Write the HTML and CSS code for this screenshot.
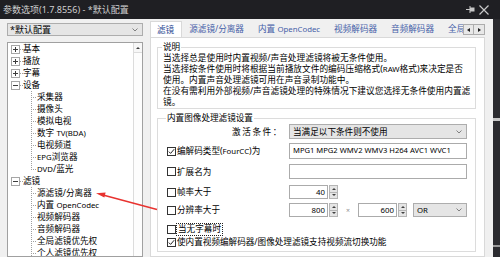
FILE: index.html
```html
<!DOCTYPE html>
<html lang="zh-CN">
  <head>
    <meta charset="UTF-8" />
    <title>参数选项</title>
    <link rel="stylesheet" href="styles.css">
  </head>
  <body>
    <div class="titlebar">
      <span class="title">参数选项(1.7.8556) - *默认配置</span>
      <span class="title-btns">
        <svg width="9" height="9" viewBox="0 0 9 9">
          <path d="M0 4.5H4M4 1V8" stroke="#c8c8c8" stroke-width="1" fill="none" />
          <rect x="4" y="2.5" width="4.5" height="4" fill="#c8c8c8" />
        </svg>
        <svg width="10" height="10" viewBox="0 0 10 10">
          <path d="M0.5 0.5L9.5 9.5M9.5 0.5L0.5 9.5" stroke="#c8c8c8" stroke-width="1.2" fill="none" />
        </svg>
      </span>
    </div>

    <div class="frame">
      <div class="window">
        <div class="sidebar">
          <div class="combo profile">
            <span>*默认配置</span>
            <svg class="chev" width="6" height="4" viewBox="0 0 6 4"><path d="M0.5 0.5L3 3L5.5 0.5" stroke="#808080" fill="none" /></svg>
          </div>
          <div class="tree">
            <div class="tree-list">
              <div class="node"><i class="box plus"></i><i class="stub"></i><span>基本</span></div>
              <div class="node"><i class="box plus"></i><i class="stub"></i><span>播放</span></div>
              <div class="node"><i class="box plus"></i><i class="stub"></i><span>字幕</span></div>
              <div class="node"><i class="box minus"></i><i class="stub"></i><span>设备</span></div>
              <div class="leaf">采集器</div>
              <div class="leaf">摄像头</div>
              <div class="leaf">模拟电视</div>
              <div class="leaf">数字 <span class="lat">TV(BDA)</span></div>
              <div class="leaf">电视频道</div>
              <div class="leaf"><span class="lat">EPG</span>浏览器</div>
              <div class="leaf last"><span class="lat">DVD</span>/蓝光</div>
              <div class="node"><i class="box minus"></i><i class="stub"></i><span>滤镜</span></div>
              <div class="leaf">源滤镜/分离器</div>
              <div class="leaf">内置 <span class="lat">OpenCodec</span></div>
              <div class="leaf">视频解码器</div>
              <div class="leaf">音频解码器</div>
              <div class="leaf">全局滤镜优先权</div>
              <div class="leaf">个人滤镜优先权</div>
            </div>
            <div class="vscroll">
              <div class="scroll-up"><i class="tri-up"></i></div>
              <div class="thumb"></div>
            </div>
          </div>
        </div>

        <div class="content">
          <div class="tabstrip">
            <div class="tab-list">
              <div class="tab active">滤镜</div>
              <div class="tab">源滤镜/分离器</div>
              <div class="tab">内置 <span class="lat">OpenCodec</span></div>
              <div class="tab">视频解码器</div>
              <div class="tab">音频解码器</div>
              <div class="tab">全局滤镜优先权</div>
            </div>
            <div class="tab-scroll">
              <span class="sbtn"><i class="tri-left"></i></span>
              <span class="sbtn"><i class="tri-right"></i></span>
            </div>
          </div>

          <div class="panel">
            <fieldset class="group">
              <legend>说明</legend>
              <p class="desc">当选择总是使用时内置视频/声音处理滤镜将被无条件使用。<br>当选择按条件使用时将根据当前播放文件的编码压缩格式(<span class="lat">RAW</span>格式)来决定是否<br>使用。内置声音处理滤镜可用在声音录制功能中。<br>在没有需利用外部视频/声音滤镜处理的特殊情况下建议您选择无条件使用内置滤<br>镜。</p>
            </fieldset>

            <fieldset class="group settings">
              <legend>内置图像处理滤镜设置</legend>

              <div class="row row-cond">
                <span class="label right">激活条件：</span>
                <div class="combo wide">
                  <span>当满足以下条件则不使用</span>
                  <svg class="chev" width="6" height="4" viewBox="0 0 6 4"><path d="M0.5 0.5L3 3L5.5 0.5" stroke="#808080" fill="none" /></svg>
                </div>
              </div>

              <div class="row row-fourcc">
                <span class="label"><i class="check on"><svg width="7" height="7" viewBox="0 0 7 7"><path d="M0.8 3.6L2.6 5.4L6.2 1.2" stroke="#222" stroke-width="1" fill="none" /></svg></i>编解码类型(<span class="lat">FourCC</span>)为</span>
                <div class="edit wide codes">MPG1 MPG2 WMV2 WMV3 H264 AVC1 WVC1</div>
              </div>

              <div class="row row-ext">
                <span class="label"><i class="check"></i>扩展名为</span>
                <div class="edit wide"></div>
              </div>

              <div class="row row-fps">
                <span class="label"><i class="check"></i>帧率大于</span>
                <div class="spinbox">
                  <div class="edit num">40</div>
                  <div class="spin"><span><i class="tri-up"></i></span><span><i class="tri-down"></i></span></div>
                </div>
              </div>

              <div class="row row-res">
                <span class="label"><i class="check"></i>分辨率大于</span>
                <div class="spinbox">
                  <div class="edit num">800</div>
                  <div class="spin"><span><i class="tri-up"></i></span><span><i class="tri-down"></i></span></div>
                </div>
                <span class="times">×</span>
                <div class="spinbox">
                  <div class="edit num">600</div>
                  <div class="spin"><span><i class="tri-up"></i></span><span><i class="tri-down"></i></span></div>
                </div>
                <div class="combo small">
                  <span class="lat">OR</span>
                  <svg class="chev" width="6" height="4" viewBox="0 0 6 4"><path d="M0.5 0.5L3 3L5.5 0.5" stroke="#808080" fill="none" /></svg>
                </div>
              </div>

              <div class="row row-nosub">
                <span class="label"><i class="check"></i><span class="focus">当无字幕时</span></span>
              </div>

              <div class="row row-switch">
                <span class="label"><i class="check on"><svg width="7" height="7" viewBox="0 0 7 7"><path d="M0.8 3.6L2.6 5.4L6.2 1.2" stroke="#222" stroke-width="1" fill="none" /></svg></i>使内置视频编解码器/图像处理滤镜支持视频流切换功能</span>
              </div>
            </fieldset>
          </div>
        </div>
      </div>
      <div class="behind"></div>
    </div>

    <svg class="arrow" width="500" height="257" viewBox="0 0 500 257">
      <path d="M157 209.5L102 194.8" stroke="#e8322f" stroke-width="1.4" fill="none" />
      <path d="M96 193.2L105.6 192.4L104.4 197.6Z" fill="#e8322f" />
    </svg>
  </body>
</html>
```

FILE: styles.css
```css
* {
  box-sizing: border-box;
}
body {
  margin: 0;
  width: 500px;
  height: 257px;
  overflow: hidden;
  position: relative;
  background-color: #1f1f23;
  font-family: "Noto Sans", "Noto Sans CJK SC", sans-serif;
  font-size: 8.6px;
  color: #000;
}
i {
  font-style: normal;
}
/* Latin runs are narrower in the original UI font */
.lat {
  font-size: 7.8px;
}

/* title bar */
.titlebar {
  height: 19px;
  display: flex;
  align-items: center;
  justify-content: space-between;
  padding: 0 11px 0 3px;
  color: #cfcfcf;
  font-size: 9px;
  line-height: 19px;
}
.title-btns {
  display: flex;
  align-items: center;
  gap: 4px;
}

.frame {
  display: flex;
  height: 238px;
}
.window {
  width: 493px;
  flex-shrink: 0;
  background-color: #f0f0f0;
  display: flex;
}
.behind {
  flex: 1;
  background-color: #2b2b2f;
  background-image: linear-gradient(#c8c8c8, #c8c8c8), linear-gradient(#9a9a9a, #9a9a9a);
  background-size: 100% 3px, 100% 2px;
  background-position: 0 99px, 0 226px;
  background-repeat: no-repeat;
}

/* left side */
.sidebar {
  width: 150px;
  flex-shrink: 0;
  padding: 4px 7px 0 7px;
  display: flex;
  flex-direction: column;
}
.combo {
  display: flex;
  align-items: center;
  justify-content: space-between;
  background-color: #e5e5e5;
  border: 1px solid #adadad;
  padding: 0 4px 0 3px;
  line-height: 12px;
  white-space: nowrap;
}
.combo.profile {
  height: 13px;
  margin-bottom: 6px;
  font-size: 9px;
  padding-left: 2px;
}
.tree {
  flex: 1;
  min-height: 0;
  display: flex;
  background-color: #fff;
  border: 1px solid #a0a0a0;
  overflow: hidden;
}
.tree-list {
  flex: 1;
  white-space: nowrap;
}
.node,
.leaf {
  height: 12px;
  line-height: 12px;
}
.node {
  display: flex;
  align-items: center;
  padding-left: 3px;
}
.box {
  width: 9px;
  height: 9px;
  border: 1px solid #a6a6a6;
  background-color: #fff;
  background-image: linear-gradient(#3c3c3c, #3c3c3c), linear-gradient(#3c3c3c, #3c3c3c);
  background-size: 5px 1px, 1px 5px;
  background-position: center, center;
  background-repeat: no-repeat;
}
.box.minus {
  background-size: 5px 1px, 0 0;
}
.stub {
  width: 3px;
  height: 1px;
  background-image: repeating-linear-gradient(to right, #a0a0a0 0 1px, transparent 1px 2px);
}
.leaf {
  padding-left: 29px;
  background-image: repeating-linear-gradient(#a0a0a0 0 1px, transparent 1px 2px),
    repeating-linear-gradient(to right, #a0a0a0 0 1px, transparent 1px 2px);
  background-size: 1px 100%, 5px 1px;
  background-position: 23px 0, 23px 6px;
  background-repeat: no-repeat;
}
.leaf.last {
  background-size: 1px 7px, 5px 1px;
}
.vscroll {
  width: 9px;
  border-left: 1px solid #dcdcdc;
  background-color: #f7f7f7;
  display: flex;
  flex-direction: column;
}
.scroll-up {
  height: 9px;
  display: flex;
  align-items: center;
  justify-content: center;
}
.thumb {
  flex: 1;
  border-top: 1px solid #dcdcdc;
  background-color: #fdfdfd;
}

/* little triangles */
.tri-up,
.tri-down,
.tri-left,
.tri-right {
  width: 0;
  height: 0;
  border: 2px solid transparent;
}
.tri-up {
  border-bottom: 2.5px solid #404040;
  border-top-width: 0;
}
.tri-down {
  border-top: 2.5px solid #404040;
  border-bottom-width: 0;
}
.tri-left {
  border-right: 3px solid #202020;
  border-left-width: 0;
}
.tri-right {
  border-left: 3px solid #202020;
  border-right-width: 0;
}

/* right side */
.content {
  flex: 1;
  min-width: 0;
  padding: 2px 8px 0 0;
  display: flex;
  flex-direction: column;
}
.tabstrip {
  height: 16px;
  display: flex;
}
.tab-list {
  flex: 1;
  min-width: 0;
  display: flex;
  align-items: flex-end;
  overflow: hidden;
}
.tab {
  height: 15px;
  line-height: 14px;
  padding: 0 7px;
  white-space: nowrap;
  color: #4660a8;
  flex-shrink: 0;
}
.tab.active {
  height: 17px;
  line-height: 16px;
  margin-bottom: -1px;
  background-color: #fff;
  border: 1px solid #d9d9d9;
  border-bottom: none;
  padding: 0 7px 0 6px;
  color: #2f4b94;
  position: relative;
  z-index: 1;
}
.tab-scroll {
  display: flex;
  margin-top: 3px;
  height: 11px;
}
.sbtn {
  width: 11px;
  height: 11px;
  display: flex;
  align-items: center;
  justify-content: center;
  background-color: #e8e8e8;
  border: 1px solid #adadad;
}
.sbtn + .sbtn {
  border-left: none;
}
.panel {
  flex: 1;
  background-color: #fff;
  border: 1px solid #d9d9d9;
  padding: 3.5px 8px 0 6px;
}
.group {
  margin: 0;
  padding: 0 0 0 5px;
  border: 1px solid #dcdcdc;
  min-width: 0;
}
.group legend {
  padding: 0 1px;
  margin-left: -1px;
  line-height: 11px;
}
.desc {
  margin: 0;
  font-size: 8.7px;
  line-height: 11px;
  white-space: nowrap;
}
.settings {
  margin-top: 4px;
  padding: 0.5px 8px 3px 9px;
}
.row {
  display: flex;
  align-items: center;
  white-space: nowrap;
}
.label {
  width: 122px;
  flex-shrink: 0;
  display: flex;
  align-items: center;
  line-height: 12px;
}
.label.right {
  justify-content: flex-end;
  padding-right: 6px;
  letter-spacing: 1.6px;
}
.check {
  width: 9px;
  height: 9px;
  border: 1px solid #333;
  background-color: #fff;
  margin-right: 1px;
  display: flex;
  align-items: center;
  justify-content: center;
  flex-shrink: 0;
}
.edit {
  height: 100%;
  border: 1px solid #ababab;
  background-color: #fff;
  padding: 0 3px;
  line-height: 13px;
}
.edit.codes {
  font-size: 7.6px;
}
.wide {
  flex: 1;
}
.row-cond {
  height: 15px;
}
.row-fourcc {
  height: 16px;
  margin-top: 4px;
}
.row-ext {
  height: 15px;
  margin-top: 5px;
}
.row-fps {
  height: 14px;
  margin-top: 6px;
}
.row-res {
  height: 14px;
  margin-top: 4px;
}
.row-nosub {
  height: 12px;
  margin-top: 6px;
}
.row-switch {
  height: 12px;
  margin-top: 1px;
}
.row-cond .combo {
  height: 15px;
}
.spinbox {
  width: 49px;
  height: 14px;
  display: flex;
  flex-shrink: 0;
}
.spinbox .num {
  flex: 1;
  text-align: right;
  padding-right: 2px;
  line-height: 12px;
  font-size: 7.8px;
}
.spin {
  width: 9px;
  margin-left: 1px;
  display: flex;
  flex-direction: column;
}
.spin span {
  flex: 1;
  display: flex;
  align-items: center;
  justify-content: center;
  background-color: #e5e5e5;
  border: 1px solid #b5b5b5;
}
.spin span + span {
  border-top: none;
}
.times {
  width: 20px;
  text-align: center;
  color: #909090;
  font-size: 7px;
}
.combo.small {
  width: 54px;
  height: 14px;
  margin-left: 6px;
}
.focus {
  outline: 1px dotted #222;
  outline-offset: 0;
  padding: 0 1px;
  line-height: 11px;
}

.arrow {
  position: absolute;
  left: 0;
  top: 0;
  pointer-events: none;
}
```
